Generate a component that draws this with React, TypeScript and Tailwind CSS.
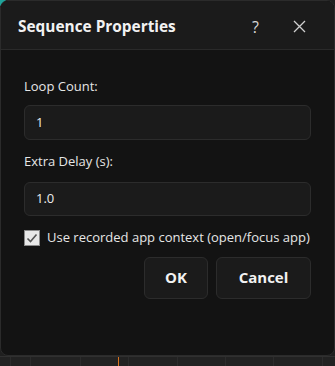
import React from "react";

export default function App() {
  const ticks = [10, 30, 80, 128, 177, 225, 273, 322];
  return (
    <div
      className="w-[335px] h-[366px] bg-[#1f1f1f] flex flex-col overflow-hidden relative"
      style={{ fontFamily: '"Open Sans", "Noto Sans", sans-serif' }}
    >
      {/* teal hint behind top-left corner */}
      <div className="absolute left-0 top-0 w-[6px] h-[6px] bg-[#1fa39a]" />

      {/* dialog */}
      <div className="relative h-[356px] bg-[#131313] rounded-[8px] border border-[#2b2b2b] flex flex-col overflow-hidden">
        {/* title bar */}
        <div className="h-[49px] bg-[#1b1b1b] border-b border-[#2a2a2a] flex items-center pt-[3px] pl-[17px] pr-[28px] shrink-0">
          <span className="text-[15.4px] font-bold text-[#f2f2f2]">Sequence Properties</span>
          <span className="ml-auto text-[16px] text-[#d8d8d8] mr-[34px]">?</span>
          <svg width="13" height="13" viewBox="0 0 13 13" className="text-[#cfcfcf]">
            <path d="M1 1 L12 12 M12 1 L1 12" stroke="currentColor" strokeWidth="1.3" />
          </svg>
        </div>

        {/* body */}
        <div className="flex flex-col px-[23px] pt-[27px]">
          <label className="text-[13px] text-[#e6e6e6] leading-[18px]">Loop Count:</label>
          <div className="mt-[10px] h-[35px] rounded-[6px] bg-[#1b1b1b] border border-[#2c2c2c] flex items-center px-[11px] text-[13px] text-[#ececec]">
            1
          </div>
          <label className="mt-[12px] text-[13px] text-[#e6e6e6] leading-[18px]">Extra Delay (s):</label>
          <div className="mt-[12px] h-[34px] rounded-[6px] bg-[#1b1b1b] border border-[#2c2c2c] flex items-center px-[11px] text-[13px] text-[#ececec]">
            1.0
          </div>

          <div className="mt-[12px] flex items-center">
            <div className="w-[16px] h-[16px] bg-[#e8e8e8] border border-[#8a8a8a] flex items-center justify-center">
              <svg width="12" height="12" viewBox="0 0 12 12">
                <path d="M1.5 6.5 L4.5 9.5 L10.5 2.5" fill="none" stroke="#555555" strokeWidth="1.6" />
              </svg>
            </div>
            <span className="ml-[7px] text-[13px] text-[#e6e6e6]">Use recorded app context (open/focus app)</span>
          </div>

          <div className="mt-[9px] flex justify-end gap-[8px]">
            <button className="w-[64px] h-[42px] rounded-[6px] bg-[#1b1b1b] border border-[#2c2c2c] text-[15px] font-bold text-[#f2f2f2]">
              OK
            </button>
            <button className="w-[95px] h-[42px] rounded-[6px] bg-[#1b1b1b] border border-[#2c2c2c] text-[15px] font-bold text-[#f2f2f2]">
              Cancel
            </button>
          </div>
        </div>
      </div>

      {/* timeline strip below */}
      <div className="relative flex-1 bg-[#222222] border-t border-[#303030]">
        {ticks.map((x) => (
          <div key={x} className="absolute top-0 bottom-0 w-px bg-[#2c2c2c]" style={{ left: x }} />
        ))}
        <div className="absolute top-0 bottom-0 left-[118px] w-px bg-[#d9731f]" />
      </div>
    </div>
  );
}
